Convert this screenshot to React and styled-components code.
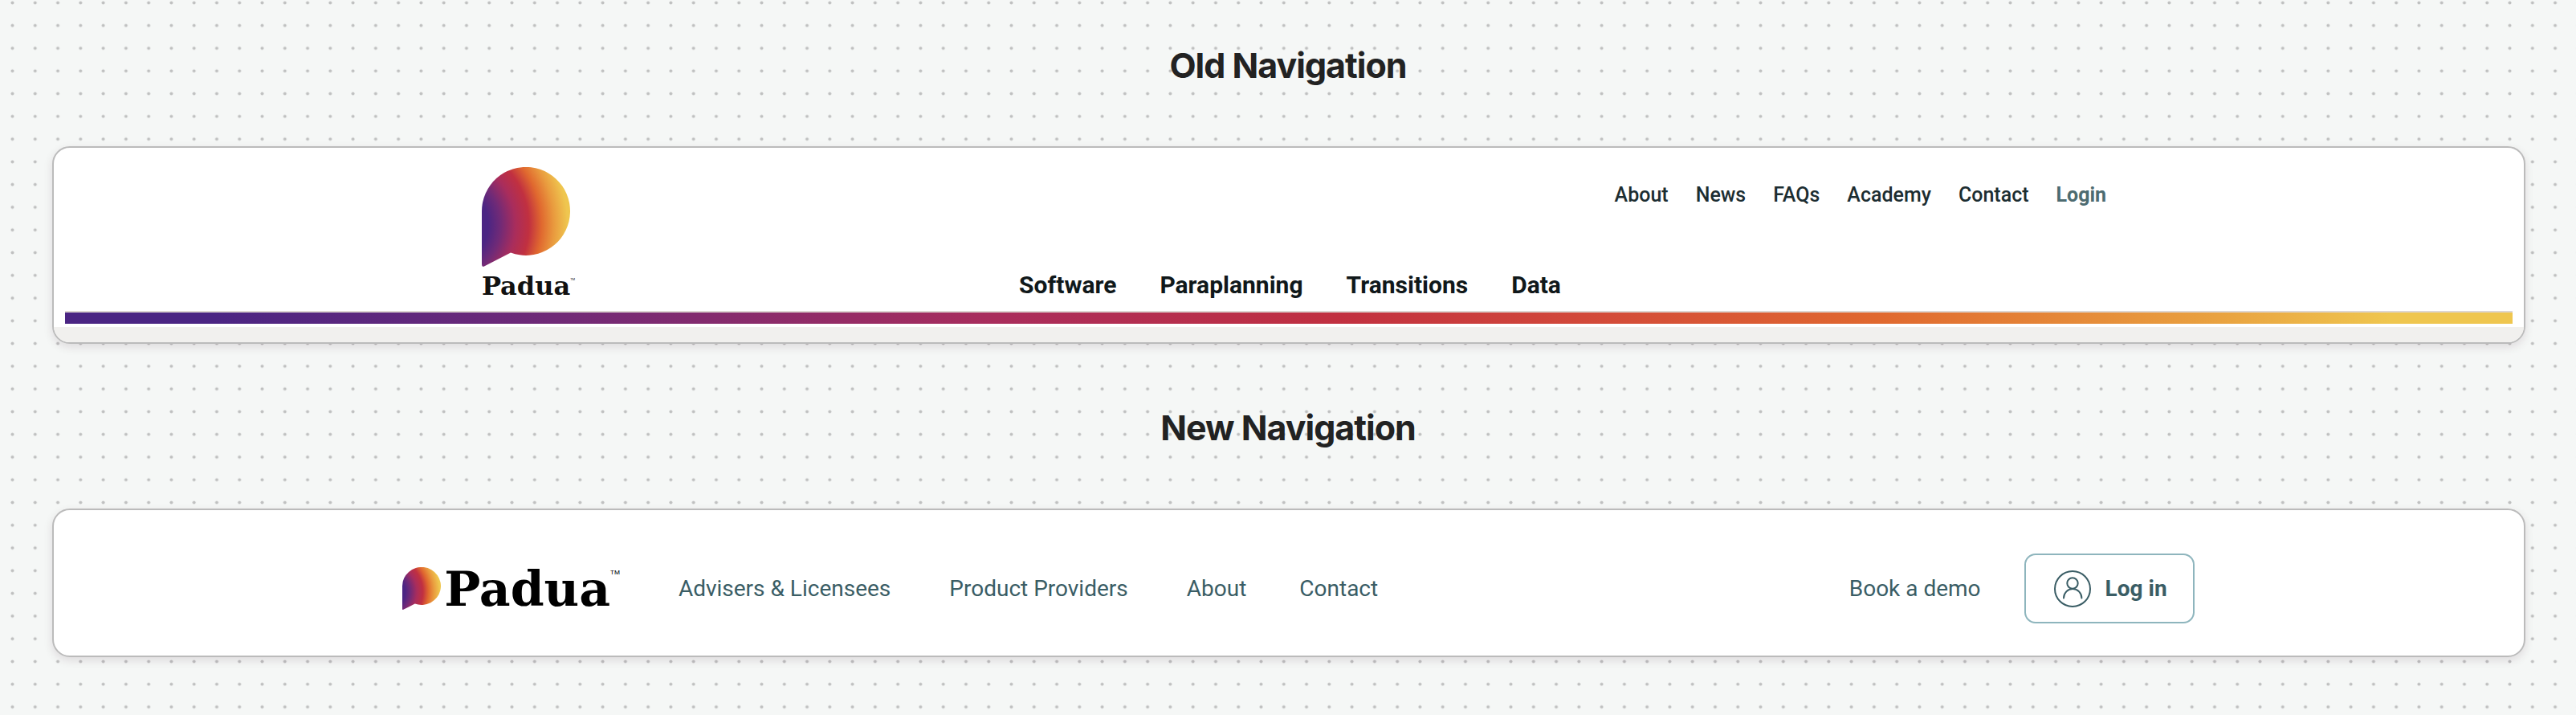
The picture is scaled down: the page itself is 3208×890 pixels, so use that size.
import React, { useId } from 'react';
import styled, { createGlobalStyle } from 'styled-components';

const GlobalStyle = createGlobalStyle`
  * {
    box-sizing: border-box;
  }
  body {
    margin: 0;
    background: #f5f7f6;
    font-family: Roboto, 'Liberation Sans', sans-serif;
  }
`;

const Page = styled.main`
  position: relative;
  z-index: 0;
  min-height: 100vh;
  padding: 49px 63px 71px 65px;
`;

const Dots = styled.svg`
  position: absolute;
  inset: 0;
  z-index: -1;
  width: 100%;
  height: 100%;
`;

const Title = styled.h2`
  margin: 0;
  padding: 0 2px 69px 0;
  font-family: Inter, sans-serif;
  font-size: 43px;
  font-weight: 700;
  line-height: 64px;
  letter-spacing: -1px;
  text-align: center;
  color: #222;
`;

const Card = styled.header`
  overflow: hidden;
  background: #fff;
  border: 2px solid #bbb;
  border-radius: 22px;
  box-shadow: 0 4px 12px rgba(60, 20, 40, 0.12);
`;

const OldCard = styled(Card)`
  margin-bottom: 72px;
`;

const OldRow = styled.div`
  display: grid;
  grid-template-columns: 17% 1fr 17%;
  height: 203px;
`;

const OldLogo = styled.a`
  grid-column: 2;
  grid-row: 1;
  justify-self: start;
  display: flex;
  flex-direction: column;
  gap: 6px;
  padding: 24px 0 0 10px;
  color: #111;
  text-decoration: none;
`;

const NewLogo = styled.a`
  display: flex;
  align-items: center;
  gap: 4px;
  margin-right: 73px;
  color: #000;
  text-decoration: none;
`;

const Wordmark = styled.span`
  font-family: 'DejaVu Serif', 'Liberation Serif', serif;
  font-weight: 700;
  font-size: ${(p) => (p.$large ? '60px' : '32px')};
  line-height: ${(p) => (p.$large ? '64px' : '36px')};
`;

const Trademark = styled.span`
  font-size: ${(p) => (p.$large ? '8px' : '4px')};
  line-height: ${(p) => (p.$large ? '24px' : '20px')};
`;

const WordRow = styled.span`
  display: flex;
`;

const OldNavs = styled.div`
  grid-column: 2;
  grid-row: 1;
  display: flex;
  flex-direction: column;
  justify-content: space-between;
  margin-right: -3px;
  padding: 43px 0 12px;
`;

const TopNav = styled.nav`
  display: flex;
  justify-content: flex-end;
  gap: 34px;
`;

const MainNav = styled.nav`
  display: flex;
  justify-content: center;
  gap: 54px;
`;

const TopLink = styled.a`
  font-size: 25px;
  font-weight: ${(p) => (p.$accent ? 700 : 500)};
  line-height: 32px;
  color: ${(p) => (p.$accent ? '#4d6b70' : '#1c2d31')};
  text-decoration: none;
`;

const MainLink = styled.a`
  font-size: 30px;
  font-weight: 700;
  line-height: 40px;
  color: #10181a;
  text-decoration: none;
`;

const Rainbow = styled.div`
  height: 16px;
  margin: 0 14px;
  border-top: 2px solid #ddd6d2;
  background: linear-gradient(to right, #4b2583 6%, #702a77 20%, #a92d5c 38%, #c13040 52%, #d2493a 62%, #e0682f 74%, #e9a240 88%, #efc64f 95%);
`;

const Footing = styled.div`
  height: 23px;
  border-top: 4px solid #fff;
  background: #f1f0ee;
`;

const NewCard = styled(Card)`
  display: flex;
  align-items: center;
  padding: 54px 13% 40px 14.1%;
`;

const NewNav = styled.nav`
  display: flex;
  gap: 73px;
`;

const CompanyLinks = styled.div`
  display: flex;
  gap: 66px;
`;

const NewLink = styled.a`
  font-size: 28px;
  line-height: 40px;
  color: #3a5d65;
  text-decoration: none;
  white-space: nowrap;
`;

const Actions = styled.div`
  display: flex;
  align-items: center;
  gap: 54px;
  margin: 0 10px 0 auto;
`;

const LoginButton = styled.button`
  display: flex;
  align-items: center;
  gap: 18px;
  height: 87px;
  padding: 0 32px 0 35px;
  border: 2px solid #8eb5bd;
  border-radius: 14px;
  background: #fff;
  font-family: inherit;
  font-size: 28px;
  font-weight: 700;
  color: #3a5d65;
`;

const topLinks = ['About', 'News', 'FAQs', 'Academy', 'Contact'];
const mainLinks = ['Software', 'Paraplanning', 'Transitions', 'Data'];
const productLinks = ['Advisers & Licensees', 'Product Providers'];
const companyLinks = ['About', 'Contact'];

const Mark = ({ width, height }) => {
  const id = useId();
  return (
    <svg width={width} height={height} viewBox="0 0 110 124" preserveAspectRatio="none" aria-hidden="true">
      <defs>
        <radialGradient id={id} gradientUnits="userSpaceOnUse" cx="-45" cy="72" r="155">
          <stop offset="0.34" stopColor="#4b2583" />
          <stop offset="0.44" stopColor="#702a77" />
          <stop offset="0.56" stopColor="#a92d5c" />
          <stop offset="0.67" stopColor="#c13040" />
          <stop offset="0.77" stopColor="#e0682f" />
          <stop offset="0.87" stopColor="#e99a3e" />
          <stop offset="0.98" stopColor="#efc64f" />
        </radialGradient>
      </defs>
      <path d="M0 55A55 55 0 1 1 36 106.500L3 123.500Q0 125 0 121Z" fill={`url(#${id})`} />
    </svg>
  );
};

const UserIcon = () => (
  <svg width="46" height="46" viewBox="0 0 46 46" fill="none" stroke="#3a5d65" strokeWidth="2" aria-hidden="true">
    <circle cx="23" cy="23" r="22" />
    <circle cx="23" cy="16" r="6.700" />
    <path d="M12 34.500a11.200 11.500 0 0 1 22.400 0" strokeLinecap="round" />
  </svg>
);

const App = () => (
  <Page>
    <GlobalStyle />
    <Dots aria-hidden="true">
      <defs>
        <pattern id="dots" width="28.273" height="28.273" x="1.360" y="-10.640" patternUnits="userSpaceOnUse">
          <circle cx="14.136" cy="14.136" r="2" fill="#bfc0c0" />
        </pattern>
      </defs>
      <rect width="100%" height="100%" fill="url(#dots)" />
    </Dots>

    <Title>Old Navigation</Title>
    <OldCard>
      <OldRow>
        <OldLogo href="#" aria-label="Padua">
          <Mark width={110} height={124} />
          <WordRow>
            <Wordmark>Padua</Wordmark>
            <Trademark>TM</Trademark>
          </WordRow>
        </OldLogo>
        <OldNavs>
          <TopNav>
            {topLinks.map((label) => <TopLink key={label} href="#">{label}</TopLink>)}
            <TopLink href="#" $accent>Login</TopLink>
          </TopNav>
          <MainNav>
            {mainLinks.map((label) => <MainLink key={label} href="#">{label}</MainLink>)}
          </MainNav>
        </OldNavs>
      </OldRow>
      <Rainbow />
      <Footing />
    </OldCard>

    <Title>New Navigation</Title>
    <NewCard>
      <NewLogo href="#" aria-label="Padua">
        <Mark width={48} height={53} />
        <WordRow>
          <Wordmark $large>Padua</Wordmark>
          <Trademark $large>TM</Trademark>
        </WordRow>
      </NewLogo>
      <NewNav>
        {productLinks.map((label) => <NewLink key={label} href="#">{label}</NewLink>)}
        <CompanyLinks>
          {companyLinks.map((label) => <NewLink key={label} href="#">{label}</NewLink>)}
        </CompanyLinks>
      </NewNav>
      <Actions>
        <NewLink href="#">Book a demo</NewLink>
        <LoginButton type="button">
          <UserIcon />
          Log in
        </LoginButton>
      </Actions>
    </NewCard>
  </Page>
);

export default App;
